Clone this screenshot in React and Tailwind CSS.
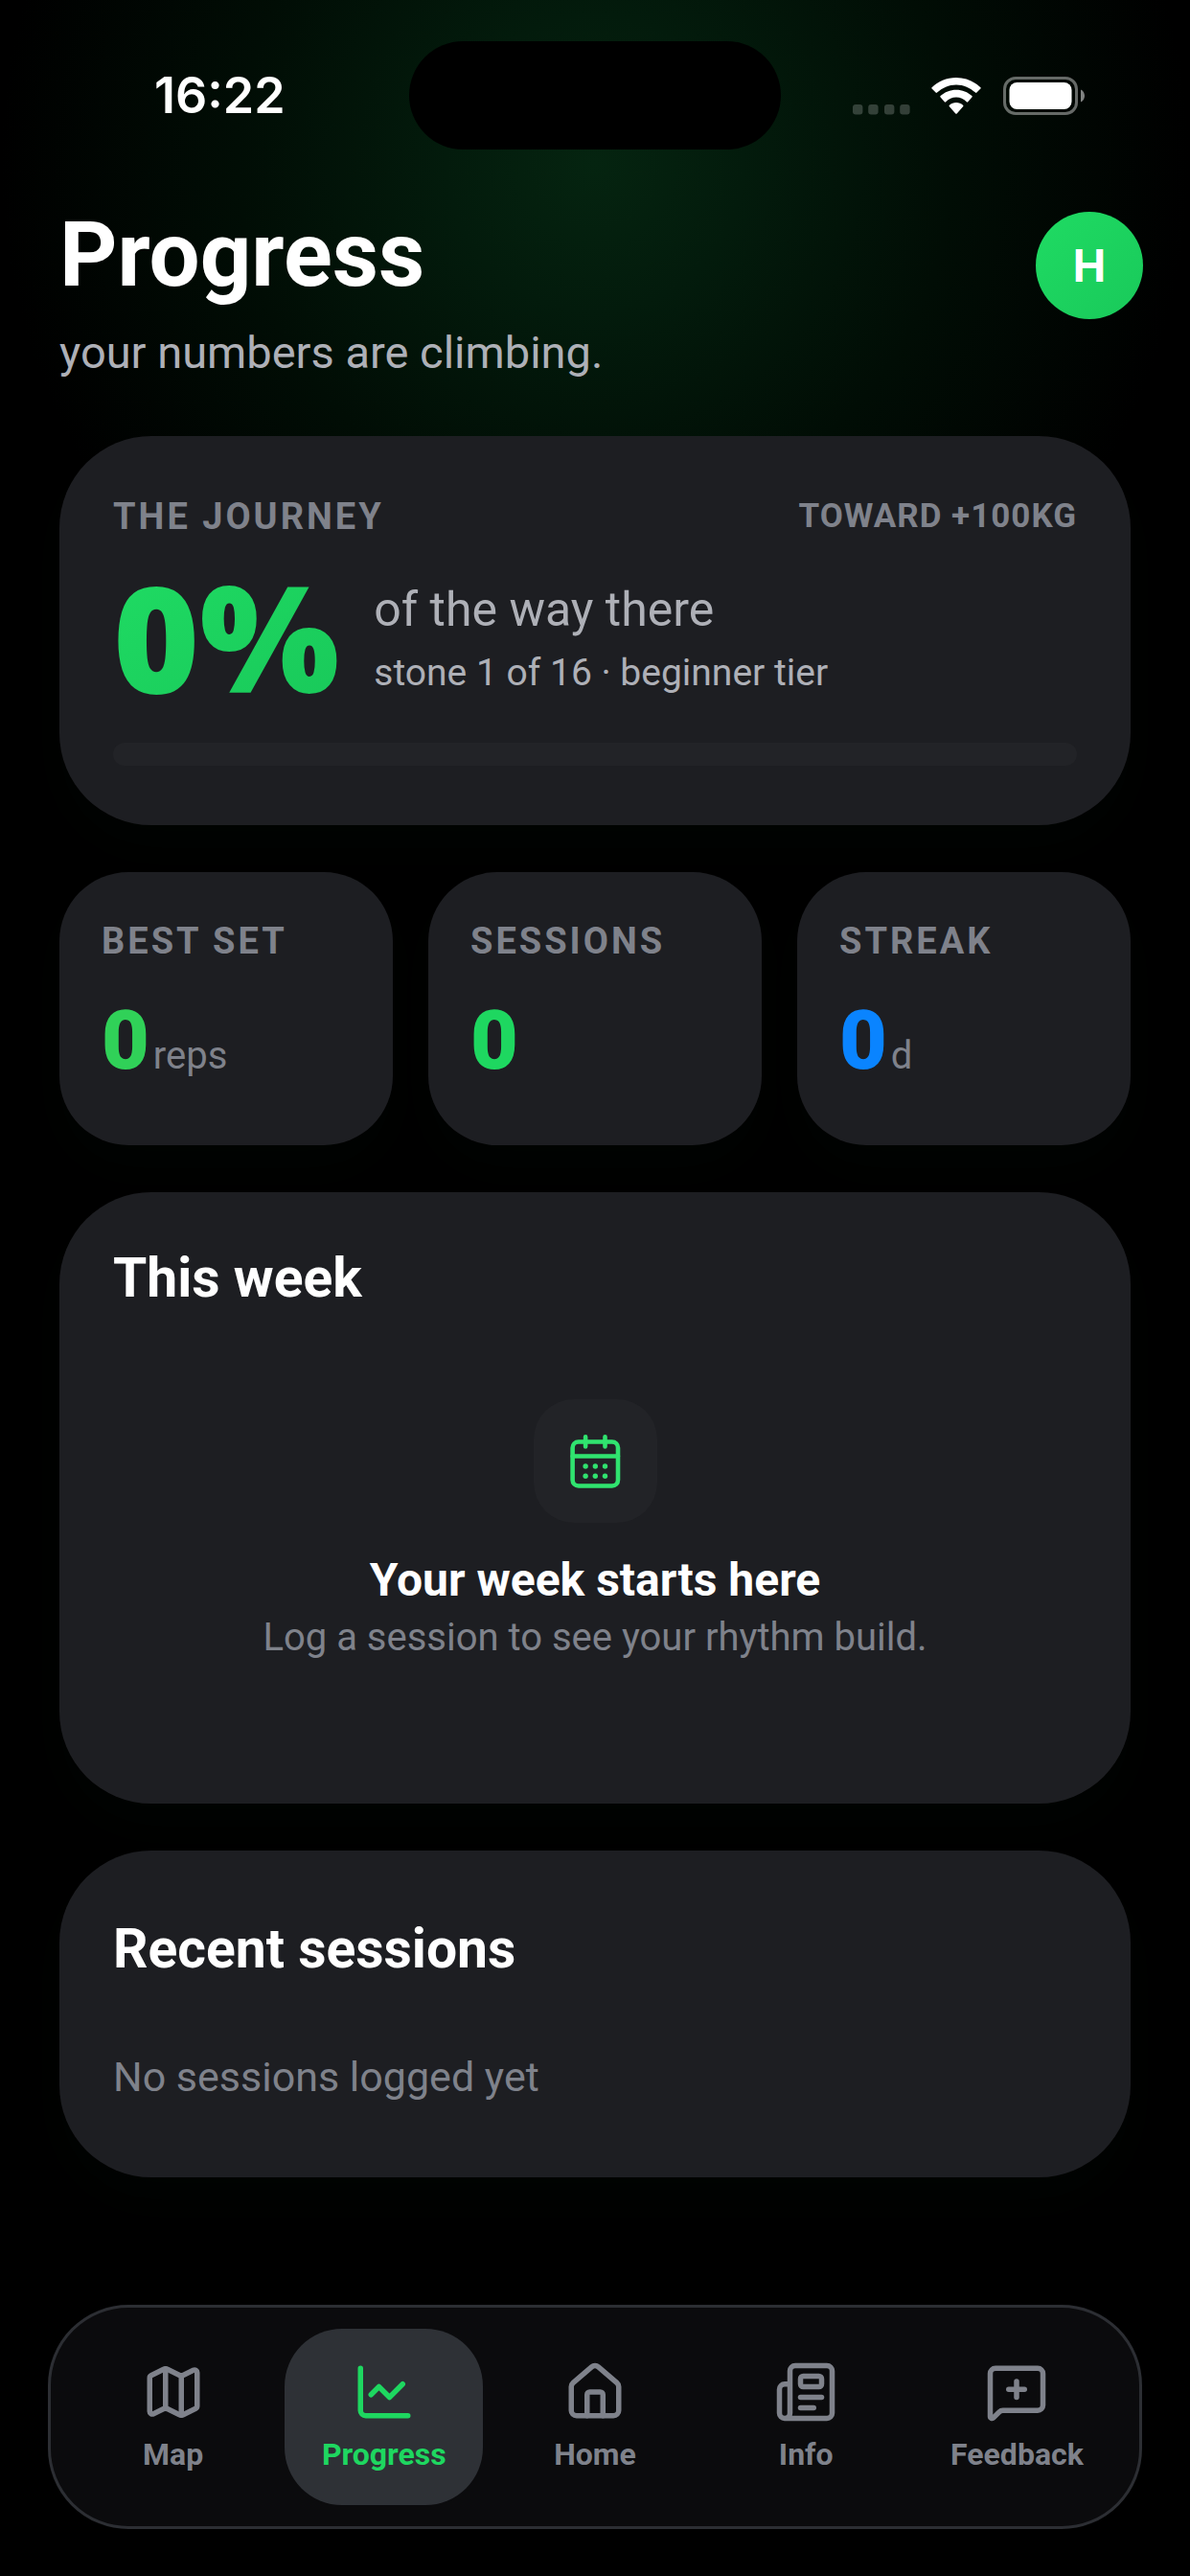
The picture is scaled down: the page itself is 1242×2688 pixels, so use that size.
import { useState } from "react";
import {
  ChartLine,
  House,
  Map as MapIcon,
  MessageSquarePlus,
  Newspaper,
} from "lucide-react";

const tabs = [
  { name: "Map", icon: MapIcon },
  { name: "Progress", icon: ChartLine },
  { name: "Home", icon: House },
  { name: "Info", icon: Newspaper },
  { name: "Feedback", icon: MessageSquarePlus },
];

const stats = [
  { label: "Best set", value: 0, unit: "reps", color: "text-[#30d158]" },
  { label: "Sessions", value: 0, unit: "", color: "text-[#1ed760]" },
  { label: "Streak", value: 0, unit: "d", color: "text-[#0a84ff]" },
];

const StatusBar = () => {
  return (
    <div className="grid grid-cols-[1fr_388px_1fr] items-center pt-[43px]">
      <span className="pl-[161px] font-[Inter,sans-serif] text-[52px] leading-[64px] font-semibold">
        16:22
      </span>
      <div className="h-[113px] rounded-full bg-black" />
      <div className="flex items-center justify-end pr-[109px]">
        <svg width="60" height="40" viewBox="0 0 60 40" fill="#ffffff" fillOpacity="0.2">
          <rect x="0" y="29" width="10.4" height="10.4" rx="3" />
          <rect x="16.2" y="29" width="10.4" height="10.4" rx="3" />
          <rect x="33" y="29" width="10.4" height="10.4" rx="3" />
          <rect x="49.2" y="29" width="10.4" height="10.4" rx="3" />
        </svg>
        <svg className="ml-[22px]" width="52" height="40" viewBox="0 0 52 40" fill="#ffffff">
          <path d="M26 1C16 1 7 5 0.6 11.2a1 1 0 0 0 0 1.4l4 4a1 1 0 0 0 1.4 0C11.4 11.6 18.4 8.4 26 8.4s14.6 3.2 20 8.2a1 1 0 0 0 1.4 0l4-4a1 1 0 0 0 0-1.4C45 5 36 1 26 1z" />
          <path d="M26 13.7c-6.3 0-12 2.4-16.4 6.4a1 1 0 0 0 0 1.5l4.2 4.7a1 1 0 0 0 1.4 0C18 23.2 21.8 21.4 26 21.4s8 1.8 10.8 4.9a1 1 0 0 0 1.4 0l4.2-4.7a1 1 0 0 0 0-1.5C38 16.1 32.3 13.7 26 13.7z" />
          <path d="M26 27c-2.7 0-5.2 1-7.1 2.7a1 1 0 0 0 0 1.5l6.4 7.2a1 1 0 0 0 1.4 0l6.4-7.2a1 1 0 0 0 0-1.5C31.2 28 28.7 27 26 27z" />
        </svg>
        <svg className="ml-[23px]" width="86" height="40" viewBox="0 0 86 40">
          <rect x="1.5" y="1.5" width="75" height="37" rx="11.5" fill="none" stroke="#ffffff" strokeOpacity="0.4" strokeWidth="3" />
          <rect x="6.5" y="6" width="65" height="28" rx="8" fill="#ffffff" />
          <path d="M81 13.5c2.4 1.2 4 3.6 4 6.5s-1.6 5.3-4 6.5z" fill="#ffffff" fillOpacity="0.5" />
        </svg>
      </div>
    </div>
  );
};

const CalendarIcon = () => {
  return (
    <svg
      width="62"
      height="62"
      viewBox="0 0 62 62"
      fill="none"
      stroke="currentColor"
      strokeWidth="4.6"
      strokeLinecap="round"
      strokeLinejoin="round"
    >
      <rect x="7.6" y="10.5" width="47.4" height="46" rx="6.2" />
      <path d="M21.1 5.2v10.2M41.5 5.2v10.2M7.6 25.5h47.4" />
      <g fill="currentColor" stroke="none">
        <circle cx="21.1" cy="36" r="2.7" />
        <circle cx="31.3" cy="36" r="2.7" />
        <circle cx="41.5" cy="36" r="2.7" />
        <circle cx="21.1" cy="46.3" r="2.7" />
        <circle cx="31.3" cy="46.3" r="2.7" />
        <circle cx="41.5" cy="46.3" r="2.7" />
      </g>
    </svg>
  );
};

const Card = ({ className, children }) => {
  return (
    <section
      className={`bg-[#1d1e22] shadow-[0_24px_54px_rgba(30,215,96,0.02)] ${className}`}
    >
      {children}
    </section>
  );
};

const StatCard = ({ stat }) => {
  return (
    <Card className="flex-1 rounded-[72px] px-11 pt-11 pb-[53px]">
      <h2 className="text-[38px] leading-[56px] font-bold tracking-[3px] text-[#7f828b] uppercase">
        {stat.label}
      </h2>
      <p className="mt-5 flex items-baseline gap-1">
        <span className={`text-[86px] leading-[112px] font-black ${stat.color}`}>
          {stat.value}
        </span>
        {stat.unit && (
          <span className="text-[40px] text-[#7f828b]">{stat.unit}</span>
        )}
      </p>
    </Card>
  );
};

const TabBar = ({ active, setActive }) => {
  return (
    <nav className="mx-[50px] mt-auto mb-[49px] flex gap-[13px] rounded-[84px] border-[3px] border-[#2c2e33] bg-[#0b0b0d] px-6 py-[22px]">
      {tabs.map(({ name, icon: Icon }) => (
        <button
          key={name}
          onClick={() => setActive(name)}
          className={`flex flex-1 basis-0 cursor-pointer flex-col items-center gap-3 rounded-[60px] py-[33px] ${
            active === name ? "bg-[#2e3136] text-[#1ed760]" : "text-[#7f828b]"
          }`}
        >
          <Icon size={66} />
          <span className="text-[32px] leading-[40px] font-bold">{name}</span>
        </button>
      ))}
    </nav>
  );
};

const App = () => {
  const [active, setActive] = useState("Progress");

  return (
    <div className="flex min-h-screen flex-col bg-black bg-[radial-gradient(circle_620px_at_50%_170px,#052410_0%,#031b0c_25%,#010d05_60%,#000000_100%)] bg-no-repeat font-[Roboto,sans-serif] text-white">
      <StatusBar />

      <header className="mt-[54px] flex items-start justify-between pr-[49px] pl-[62px]">
        <div>
          <h1 className="text-[94px] leading-[112px] font-bold">Progress</h1>
          <p className="mt-4 text-[47px] leading-[60px] text-[#aeb0b7]">
            your numbers are climbing.
          </p>
        </div>
        <button className="mt-[11px] flex size-28 cursor-pointer items-center justify-center rounded-full bg-linear-to-br from-[#1fdb63] to-[#19c95a] font-[Inter,sans-serif] text-[46px] font-bold">
          H
        </button>
      </header>

      <main className="mt-[57px] mb-12 flex flex-col gap-[49px] px-[62px]">
        <Card className="rounded-[96px] px-14 pt-14 pb-[62px]">
          <div className="flex items-center justify-between text-[#7f828b] uppercase">
            <h2 className="text-[38px] leading-[56px] font-bold tracking-[3px]">
              The journey
            </h2>
            <span className="text-[35px] font-bold tracking-[1px]">
              Toward +100kg
            </span>
          </div>
          <div className="mt-6 flex items-center gap-9 pb-4">
            <span className="bg-linear-to-br from-[#1fdb63] to-[#19c95a] bg-clip-text font-['Open_Sans',sans-serif] text-[154px] leading-[144px] font-extrabold text-transparent">
              0%
            </span>
            <div className="pt-3 text-[#aeb0b7]">
              <p className="text-[50px] leading-[66px]">of the way there</p>
              <p className="text-[39px] leading-[66px]">
                stone 1 of 16 · beginner tier
              </p>
            </div>
          </div>
          <div
            role="progressbar"
            aria-label="The journey"
            aria-valuenow={0}
            className="mt-6 h-6 rounded-full bg-[#222327]"
          />
        </Card>

        <div className="flex gap-[37px]">
          {stats.map((stat) => (
            <StatCard key={stat.label} stat={stat} />
          ))}
        </div>

        <Card className="rounded-[96px] p-14">
          <h2 className="text-[57px] leading-[68px] font-bold">This week</h2>
          <div className="flex flex-col items-center pt-[92px] pb-[87px]">
            <div className="flex size-[129px] items-center justify-center rounded-[42px] bg-[#222327] text-[#30e36f]">
              <CalendarIcon />
            </div>
            <h3 className="mt-[30px] text-[48px] leading-[60px] font-bold">
              Your week starts here
            </h3>
            <p className="text-[40px] leading-[60px] text-[#7f828b]">
              Log a session to see your rhythm build.
            </p>
          </div>
        </Card>

        <Card className="rounded-[96px] px-14 pt-[69px] pb-[75px]">
          <h2 className="text-[57px] leading-[68px] font-bold">
            Recent sessions
          </h2>
          <p className="mt-[69px] text-[43px] leading-[60px] text-[#7f828b]">
            No sessions logged yet
          </p>
        </Card>
      </main>

      <TabBar active={active} setActive={setActive} />
    </div>
  );
};

export default App;
